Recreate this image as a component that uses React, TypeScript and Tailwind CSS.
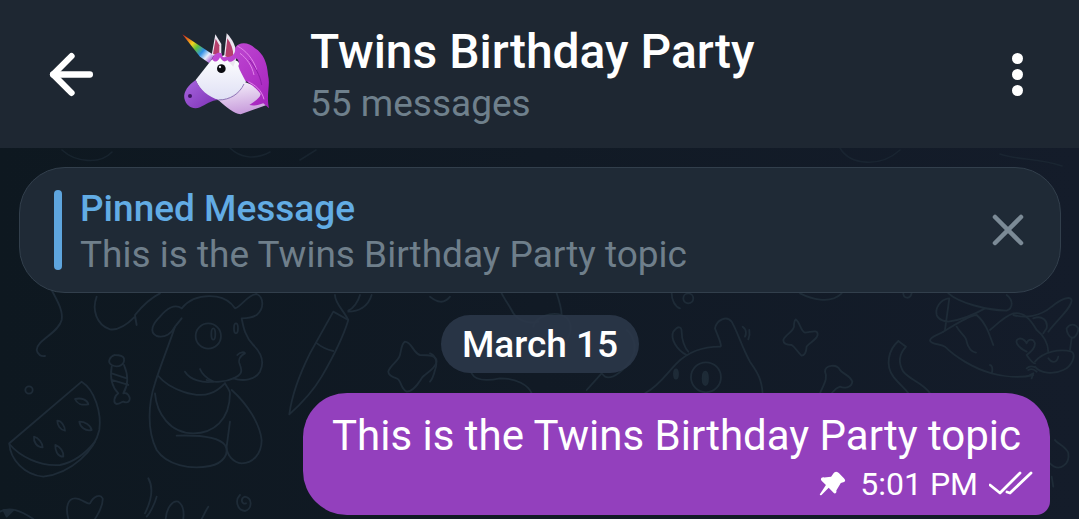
import { ArrowLeft, X } from 'lucide-react';

// doodle wallpaper behind the chat, traced by hand. each group is drawn at 3x
const Doodles = () => (
  <svg
    className="absolute inset-0 h-full w-full"
    viewBox="0 0 1079 371"
    fill="none"
    stroke="#1e2b37"
    strokeWidth="5.500"
    strokeLinecap="round"
    strokeLinejoin="round"
  >
    <g transform="translate(0 -148)">
      <g transform="translate(0 290) scale(0.3333)">
        <path d="M155 0C170 30 190 60 185 90C175 130 110 150 110 180C112 195 125 200 135 198" />
        <path d="M290 20C275 60 290 105 330 118C355 122 385 100 405 80L410 105L405 75C425 50 450 25 480 10" />
        <path d="M545 55C525 40 500 55 480 80C460 100 445 125 470 138C495 145 515 130 525 110L545 85" />
        <path d="M545 55C570 25 610 15 650 20C680 25 695 40 705 55C725 50 740 15 770 12C790 20 795 55 770 75C755 85 735 85 725 85C730 110 735 140 760 165C785 190 795 215 780 245C765 270 730 275 700 265C680 275 640 280 620 270" />
        <path d="M525 110C505 170 480 230 465 280C445 340 440 420 470 480C500 525 570 540 630 528C670 520 690 490 675 465C655 440 590 435 530 437" />
        <circle cx="625" cy="138" r="38" />
        <ellipse cx="640" cy="132" rx="6" ry="17" />
        <ellipse cx="708" cy="115" rx="6" ry="15" />
        <path d="M712 195C720 185 735 185 735 190C715 200 715 215 720 225C728 245 725 255 700 265" />
        <path d="M555 245C570 270 610 280 640 275C620 265 605 250 600 237" />
        <path d="M475 258C510 300 590 325 630 310C650 305 665 290 675 280" />
        <path d="M465 310C470 370 510 430 580 430C640 430 690 390 690 310C690 300 680 290 675 280" />
        <path d="M695 300C740 340 780 400 785 450C785 490 760 520 725 520C700 518 680 495 680 470L690 395" />
        <path d="M345 195C330 200 320 215 335 225C355 235 375 225 372 205C368 195 355 195 345 195M335 230C330 260 335 290 355 310M372 225C385 255 385 285 370 310M335 250L380 265M335 270L385 285M355 310C340 320 340 340 350 342C360 342 365 335 370 335C385 342 395 330 385 315C380 308 375 308 370 310" />
        <circle cx="87" cy="300" r="11" />
        <path d="M28 460L245 275C285 300 305 370 298 420C285 480 215 550 130 560C75 555 30 510 28 460Z" />
        <path d="M28 462C60 500 120 530 180 525C230 515 265 480 285 455" />
        <path d="M225 327C245 322 262 330 265 343C245 347 230 340 225 327ZM172 392C185 392 195 410 195 422C180 420 172 405 172 392ZM238 395C255 395 272 405 275 420C255 425 240 410 238 395ZM102 440C115 442 128 460 128 472C110 472 100 455 102 440ZM166 465C180 470 192 485 190 500C172 500 165 480 166 465Z" />
        <path d="M1000 65L1045 90C1030 140 1000 200 965 260C935 310 900 345 868 373C875 320 900 250 930 190Z" />
        <path d="M948 158C965 172 985 180 1000 183M1005 15C1005 40 1030 60 1045 90M1045 65C1075 65 1105 50 1115 15M1080 15C1075 35 1060 55 1045 62" />
        <path d="M1215 155C1235 155 1240 190 1260 195C1285 195 1310 195 1310 215C1305 240 1275 250 1265 265C1255 280 1240 305 1220 305C1200 295 1205 270 1190 265C1175 260 1165 255 1165 245C1170 225 1195 215 1200 195C1205 175 1205 160 1215 155Z" />
        <path d="M445 565C465 600 450 640 435 670M470 620C465 640 450 670 440 680M497 687C500 650 520 630 535 635C550 645 552 670 550 687M625 650C615 665 610 680 605 687" />
        <path d="M720 615C705 630 710 660 735 663C755 660 760 625 735 620C720 625 725 645 738 640" />
        <path d="M205 687C195 650 205 625 225 625C245 625 262 645 270 640C280 620 300 610 308 625C310 650 295 670 285 687" />
        <path d="M0 665C30 650 60 660 100 687" />
        <path d="M10 660L40 660L20 680Z" fill="#1e2b37" />
      </g>

      <g transform="translate(430 290) scale(0.3333)">
        <path d="M770 195C740 180 720 145 730 125C745 105 755 110 755 125C755 150 765 175 775 185" />
        <path d="M645 310C690 285 710 250 740 220C770 190 810 170 870 170C880 172 860 130 855 115C860 90 890 75 905 95C925 130 935 170 960 215C985 250 995 270 998 310" />
        <circle cx="828" cy="262" r="45" />
        <ellipse cx="826" cy="265" rx="8" ry="20" fill="#1e2b37" />
        <ellipse cx="738" cy="252" rx="6" ry="14" fill="#1e2b37" />
        <path d="M938 110C952 120 948 135 945 140M958 120C960 130 958 140 955 148" />
        <path d="M1097 88C1110 95 1112 125 1125 128C1140 128 1165 115 1163 135C1160 150 1135 160 1130 170C1128 180 1130 195 1115 197C1105 190 1095 170 1085 165C1070 165 1060 160 1060 150C1065 135 1090 125 1092 110C1092 100 1093 92 1097 88Z" />
        <path d="M725 10C725 30 735 50 750 55" />
        <circle cx="775" cy="25" r="15" />
        <path d="M215 10C225 30 240 50 250 70C270 100 310 100 325 95" />
        <path d="M310 110C315 80 365 65 395 75C425 85 430 120 410 150M380 10C390 40 395 60 395 75" />
        <path d="M125 250C135 270 160 275 210 265C260 265 295 285 305 310" />
        <path d="M470 300L515 250L525 260C545 270 590 240 610 195C620 170 610 135 590 120" />
        <path d="M0 190C15 195 25 215 15 240C10 260 5 270 0 275M0 20C20 35 40 45 60 20" />
      </g>

      <g transform="translate(800 280) scale(0.3333)">
        <path d="M0 40C30 55 90 75 125 40M310 40C310 55 330 60 335 40" />
        <path d="M60 340C70 315 85 295 75 275C75 255 110 250 120 270C125 280 150 285 157 305C155 325 130 325 120 320C105 325 100 335 95 340" />
        <path d="M295 183L318 200C295 225 295 250 310 275C330 300 370 310 390 340M295 183C265 210 255 255 280 290C295 310 315 325 325 340" />
        <path d="M430 155C415 165 390 170 390 182C395 195 420 190 435 200C465 230 520 265 575 280C610 290 660 295 700 285M575 280C580 265 575 255 570 255" />
        <path d="M445 55C420 60 405 85 410 105C415 120 435 125 445 125M448 55L435 150M445 40C480 70 560 90 620 92C640 85 640 60 620 45M445 125C480 120 520 105 555 85" />
        <path d="M430 155C470 130 510 105 530 105C560 130 570 170 580 195M470 140C480 160 500 170 500 185C505 205 515 215 528 218M570 150C590 135 610 110 640 100C670 95 690 115 710 150C730 165 745 190 745 215" />
        <path d="M640 105C675 115 720 110 755 80C780 60 810 45 815 60C815 85 770 120 745 155M700 115C725 105 745 120 740 145L730 160" />
        <path d="M680 215C650 200 640 180 660 175C670 175 678 185 680 190C685 175 700 175 705 190C705 205 695 215 680 225M680 225C690 240 700 250 705 250" />
        <path d="M705 245C730 215 780 205 815 215C830 225 815 260 790 270C760 285 720 280 705 260M745 235C755 250 770 250 775 230" />
        <path d="M800 145C810 130 825 130 835 145C835 165 820 180 810 170C805 165 800 155 800 145M815 175L810 210M680 265C690 255 700 260 705 262M685 270C695 265 705 270 710 275M690 285L700 280M695 295L700 280" />
      </g>

      <g transform="translate(780 440) scale(0.3333)">
        <path d="M810 70C840 100 870 70 865 40C860 20 830 10 825 0M815 110L820 140" />
      </g>

      <path d="M62 150C75 162 100 165 112 152M230 148C240 158 255 160 270 152M300 160L316 150M840 148C850 165 880 168 900 150M1000 154C1015 160 1040 158 1062 166" opacity="0.6" strokeWidth="1.600" />
    </g>
  </svg>
);

// the unicorn emoji, drawn at 3x
const Unicorn = () => (
  <svg viewBox="0 0 390 330" className="h-[110px] w-[130px] shrink-0">
    <defs>
      <linearGradient id="horn" gradientUnits="userSpaceOnUse" x1="97" y1="43" x2="185" y2="120">
        <stop offset="0" stopColor="#d81f1f" />
        <stop offset="0.2" stopColor="#e8751c" />
        <stop offset="0.35" stopColor="#f2d11e" />
        <stop offset="0.5" stopColor="#5fc03a" />
        <stop offset="0.68" stopColor="#2e8fe6" />
        <stop offset="0.85" stopColor="#e8eefb" />
        <stop offset="1" stopColor="#a85fd6" />
      </linearGradient>
      <linearGradient id="mane" x1="0" y1="0" x2="1" y2="1">
        <stop offset="0" stopColor="#c44fd6" />
        <stop offset="1" stopColor="#a522bd" />
      </linearGradient>
      <linearGradient id="neck" x1="0.2" y1="0" x2="0.4" y2="1">
        <stop offset="0" stopColor="#f6f2fb" />
        <stop offset="1" stopColor="#c79adb" />
      </linearGradient>
      <linearGradient id="nose" x1="0" y1="0" x2="1" y2="1">
        <stop offset="0" stopColor="#a866df" />
        <stop offset="1" stopColor="#7c30b4" />
      </linearGradient>
      <linearGradient id="face" x1="0.5" y1="0" x2="0.5" y2="1">
        <stop offset="0" stopColor="#ffffff" />
        <stop offset="1" stopColor="#dfe0f5" />
      </linearGradient>
    </defs>
    <path d="M97 43L192 106L178 130L150 110Z" fill="url(#horn)" />
    <path d="M205 240C240 235 270 215 282 185L335 205L350 255L272 283C250 280 230 262 205 240Z" fill="url(#neck)" />
    <path d="M186 118L137 180C150 210 170 235 205 240C240 240 272 215 290 180L265 125L225 105Z" fill="url(#face)" />
    <path d="M137 180C115 195 100 215 103 235C108 260 130 270 150 262C165 255 185 240 205 240C175 230 150 210 137 180Z" fill="url(#nose)" />
    <path d="M205 240C240 240 268 222 282 192" fill="none" stroke="#8f78b8" strokeWidth="3" />
    <circle cx="120" cy="228" r="6" fill="#3c1560" />
    <path d="M185 105L196 43L214 72L214 112Z" fill="#ebe6f0" />
    <path d="M189 102L197 56L208 76L208 108Z" fill="#b53f6c" />
    <path d="M222 112L230 40C248 58 260 82 260 112L250 140Z" fill="#ebe6f0" />
    <path d="M226 108L232 55C243 70 250 88 250 108L244 120Z" fill="#b53f6c" />
    <path d="M186 118C192 100 205 95 215 100C216 108 218 115 226 110C245 115 258 100 255 85C265 65 295 65 315 85C340 100 352 130 354 165C362 195 348 225 357 265L340 250C325 256 310 258 298 255C312 245 330 235 332 222C320 205 300 190 286 182C280 170 268 150 265 138C270 130 265 118 258 115C248 125 240 130 232 120C222 130 215 120 210 112C205 125 195 130 186 118Z" fill="url(#mane)" />
    <path d="M262 78C285 90 310 115 320 150M270 100C290 115 305 135 312 165M295 185C315 195 335 210 342 238" fill="none" stroke="#e285ea" strokeWidth="3" />
    <path d="M298 120C315 140 330 165 335 195" fill="none" stroke="#8d1da8" strokeWidth="3" />
    <circle cx="214" cy="146" r="13" fill="#0b0b10" />
    <circle cx="210" cy="141" r="3.500" fill="#e8e8ee" />
  </svg>
);

const App = () => {
  return (
    <div
      className="flex h-[519px] w-[1079px] flex-col overflow-hidden bg-[#0f1821] text-white"
      style={{ fontFamily: 'Roboto, sans-serif' }}
    >
      <header className="flex h-[148px] shrink-0 items-center bg-[#1e2732] pl-[40px] pr-[56px]">
        <ArrowLeft className="h-[63px] w-[63px] shrink-0" strokeWidth={2.4} />
        <div className="ml-[47px] mt-[2px]">
          <Unicorn />
        </div>
        <div className="ml-[30px] flex-1 pt-[8px]">
          <div className="text-[48px] leading-[52px] font-medium">Twins Birthday Party</div>
          <div className="text-[37px] leading-[52px] text-[#6f808c]">55 messages</div>
        </div>
        <div className="flex flex-col gap-[5px]">
          <span className="h-[11px] w-[11px] rounded-full bg-white" />
          <span className="h-[11px] w-[11px] rounded-full bg-white" />
          <span className="h-[11px] w-[11px] rounded-full bg-white" />
        </div>
      </header>

      <main className="relative flex flex-1 flex-col bg-gradient-to-r from-[#0e1820] to-[#141c2a] pl-[19px] pr-[18px] pt-[19px]">
        <Doodles />

        <div className="relative flex h-[126px] items-center rounded-[46px] border border-[#323f4c] bg-[#1f2a36] pl-[34px] pr-[26px]">
          <span className="h-[80px] w-[8px] rounded-full bg-[#5ea5de]" />
          <div className="ml-[18px] flex-1 pt-[4px]">
            <div className="text-[37px] leading-[46px] font-medium text-[#62ace4]">Pinned Message</div>
            <div className="text-[37px] leading-[46px] text-[#6f7f8b]">This is the Twins Birthday Party topic</div>
          </div>
          <X className="h-[52px] w-[52px] text-[#7b8a96]" strokeWidth={2.1} />
        </div>

        <div className="relative mt-[22px] flex justify-center">
          <span className="rounded-[29px] bg-[#2b3749]/90 px-[21px] pt-[1px] text-[37px] leading-[57px] font-medium">March 15</span>
        </div>

        <div className="relative mt-[20px] flex justify-end pr-[11px]">
          <div className="h-[122px] w-[747px] rounded-[44px] rounded-br-[14px] bg-[#9340bd] pl-[29px] pr-[17px] pt-[17px]">
            <div className="text-[42px] leading-[52px]">This is the Twins Birthday Party topic</div>
            <div className="mt-[3px] flex items-center justify-end text-[32px] leading-[38px]">
              <svg viewBox="120 92 78 72" className="-mt-[2px] h-[26px] w-[27px]" fill="#fff">
                <path d="M165 97C170 93 175 97 178 100L192 114C197 119 197 124 190 126L183 128L170 150C172 158 165 160 162 156L148 142L128 162C124 166 120 162 124 158L140 134L128 122C122 116 128 110 135 112L155 110L162 100Z" />
              </svg>
              <span className="ml-[14px]">5:01 PM</span>
              <svg viewBox="0 0 44 24" className="-mt-[2px] ml-[11px] h-[24px] w-[44px]" fill="none" stroke="#fff" strokeWidth="2.800" strokeLinecap="round" strokeLinejoin="round">
                <path d="M1 14L11 22L31 2M18 21L21 22L42 2" />
              </svg>
            </div>
          </div>
        </div>
      </main>
    </div>
  );
};

export default App;
